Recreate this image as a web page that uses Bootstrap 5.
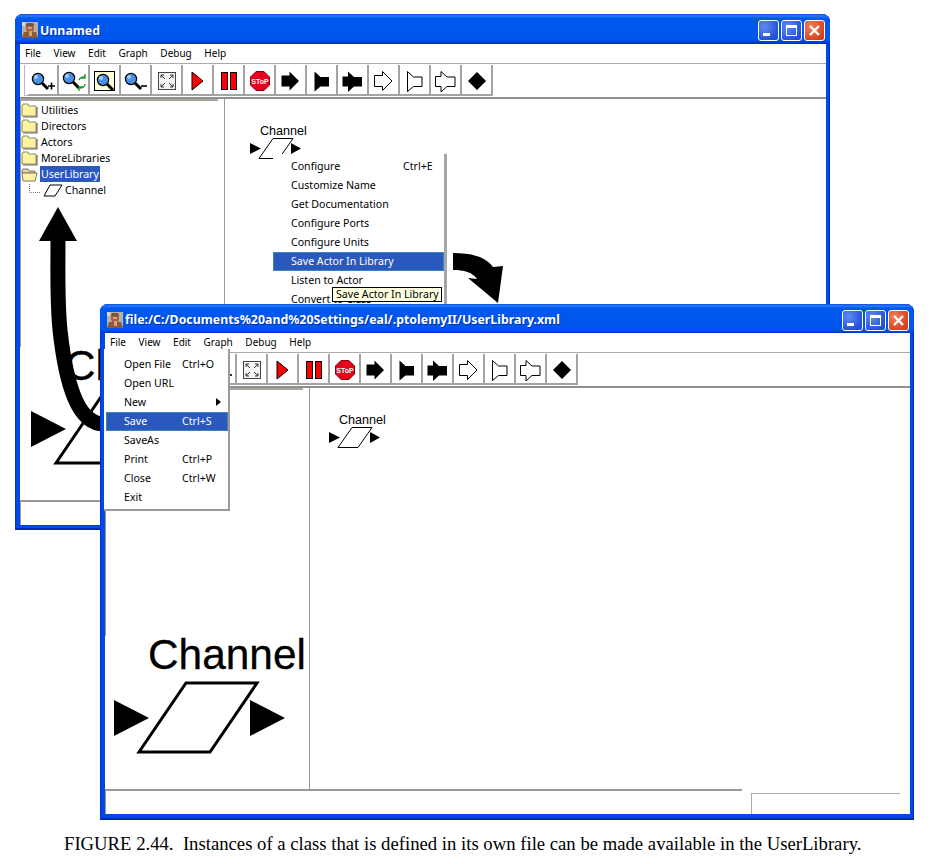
<!DOCTYPE html>
<html lang="en">
<head>
<meta charset="UTF-8">
<title>FIGURE 2.44</title>
<meta name="viewport" content="width=device-width, initial-scale=1">
<link href="https://cdn.jsdelivr.net/npm/bootstrap@5.3.0/dist/css/bootstrap.min.css" rel="stylesheet">
<style>
body { background: #fff; width: 938px; height: 864px; overflow: hidden; position: relative; font-family: "Noto Sans", "DejaVu Sans", sans-serif; font-size: 10.6px; color: #000; }

/* windows on the desktop */
.xp-window { position: absolute; width: 815px; height: 516px; background: #0048e8; border-radius: 8px 8px 0 0; padding: 0 4px 5px 5px; box-shadow: inset 1px 0 #0831d9, inset -1px 0 #0029b8, inset 0 -2px #0029b8; }
.win-one { left: 15px; top: 14px; z-index: 1; }
.win-two { left: 100px; top: 304px; width: 814px; z-index: 5; }
.xp-title { height: 30px; margin: 0 -4px 0 -5px; padding: 0 5px 0 7px; background: linear-gradient(#0a4fe0 0, #2b7bf6 2px, #0058ee 4px, #0056ec 26px, #0029c8 30px); border-radius: 8px 8px 0 0; color: #fff; font-family: "Noto Sans", "DejaVu Sans", sans-serif; font-weight: 700; font-size: 12.35px; flex: none; }
.win-two .xp-title { height: 29px; }
.title-ico { margin: 2px 2px 0 0; }
.title-text { margin-top: 4px; text-shadow: 1px 1px #0030a8; }
.cap-btn { width: 21px; height: 21px; margin: 3px 0 0 2px; border: 1px solid #fff; border-radius: 3px; background: radial-gradient(circle at 30% 30%, #5f8cf5, #2350d8 75%); }
.cap-close { background: radial-gradient(circle at 30% 30%, #f0805c, #d8401c 75%); }
.xp-inner { background: #fff; height: calc(100% - 30px); }
.menu-line { height: 19px; padding-left: 5px; gap: 12.6px; line-height: 19px; font-size: 10px; flex: none; }
.tool-line { height: 36px; border-top: 1px solid #aaa; border-bottom: 2px solid #8f8f8f; padding: 1px 0 0 4px; flex: none; }
.grip { width: 4px; height: 31px; border-left: 1px solid #bbb; border-bottom: 1px solid #bbb; }
.tool-btn { width: 31px; height: 31px; padding: 0; border: 0; border-right: 2px solid #a3a3a3; border-bottom: 2px solid #a3a3a3; border-radius: 0; background: #fff; }

/* panes */
.main-area { min-height: 0; }
.side-pane { width: 205px; border-right: 1px solid #999; }
.tree-area { height: 248px; border-top: 2px solid #aaa79a; border-left: 1px solid #999; margin-right: 6px; }
.tree-list { padding: 1px 0 0 0; }
.tree-row { height: 16px; padding: 0; border: 0; background: transparent; color: #000; line-height: 16px; gap: 3px; }
.tree-row.sel-row span { background: #2a58bd; color: #fff; padding: 0 1px; margin-left: -1px; }
.tree-child { padding-left: 8px; gap: 2px; }
.big-label { height: 38px; padding-left: 43px; font: 42.4px/38px "Liberation Sans", Arial, sans-serif; white-space: nowrap; -webkit-text-stroke: .3px #000; }
.win-one .big-label { padding-left: 45px; }
.win-one .big-shape { margin-left: 2px; }
.big-shape { display: block; }
.canvas-pane { position: relative; }
.graph-node { position: absolute; width: 56px; }
.win-one .graph-node { left: 25px; top: 25px; }
.win-two .graph-node { left: 19px; top: 25px; }
.node-label { padding-left: 10px; font: 12.6px/14px "Liberation Sans", Arial, sans-serif; }
.status-line { height: 25px; flex: none; }
.status-main { flex: 1; border-top: 2px solid #999; border-left: 1px solid #999; }
.status-side { width: 149px; height: 21px; margin: 4px 10px 0 9px; border-top: 1px solid #aaa; border-left: 1px solid #aaa; }

/* menus */
.ui-menu { display: block; min-width: 0; padding: 0; margin: 0; border: 0; border-radius: 0; font-size: 10.6px; color: #000; background: #fff; }
.ui-menu .dropdown-item { position: relative; display: flex; height: 19px; padding: 0 0 0 18px; line-height: 19px; color: #000; font-size: 10.6px; }
.ui-menu .dropdown-item.active { background: #2a58bd; color: #fff; box-shadow: inset 0 0 0 1px #3c86b4; }
.item-name { flex: none; width: 58px; }
.menu-context .item-name { width: 112px; }
.menu-context { position: absolute; left: 273px; top: 154px; width: 174px; padding-top: 3px; z-index: 2; border-right: 3px solid #a6a6a6; }
.menu-file { position: absolute; left: 104px; top: 349px; width: 126px; padding-top: 6px; padding-bottom: 2px; padding-left: 2px; z-index: 6; border-right: 2px solid #9a9a9a; border-bottom: 2px solid #9a9a9a; }
.sub-arrow { position: absolute; right: 7px; top: 5px; width: 0; height: 0; border-left: 5px solid #000; border-top: 4px solid transparent; border-bottom: 4px solid transparent; }
.hint-tip { position: absolute; left: 332px; top: 287px; width: 110px; height: 15px; background: #ffffe1; border: 1px solid #000; line-height: 13px; padding-left: 3px; z-index: 3; white-space: nowrap; }

/* hand drawn arrows */
.big-arrow { position: absolute; left: 30px; top: 200px; z-index: 2; }
.turn-arrow { position: absolute; left: 450px; top: 250px; z-index: 2; }
.fig-caption { position: absolute; left: 64px; top: 833px; font: 18.7px/22px "Liberation Serif", "Times New Roman", serif; white-space: pre; }
</style>
</head>
<body>

<!-- shared icons -->
<svg width="0" height="0" class="position-absolute">
  <defs>
    <g id="lens"><line x1="11" y1="11" x2="17" y2="17" stroke="#000" stroke-width="3"/><circle cx="7" cy="7" r="5.6" fill="#4b8fe6" stroke="#000" stroke-width="1.2"/><circle cx="5" cy="5" r="2" fill="#a8cdf5"/></g>
    <symbol id="ic-zoom-in" viewBox="0 0 24 20"><use href="#lens" x="0" y="1"/><path d="M17 15h7M20.500 11.500v7" stroke="#000" stroke-width="1.6"/></symbol>
    <symbol id="ic-zoom-reset" viewBox="0 0 24 20"><use href="#lens" x="0" y="0"/><path d="M17 9a5 4 0 0 1 6-3M23 3v4h-4M23 13a5 4 0 0 1-6 4M17 20v-4h4" fill="none" stroke="#1d9a2c" stroke-width="1.400"/></symbol>
    <symbol id="ic-zoom-fit" viewBox="0 0 21 20"><rect x=".5" y=".5" width="20" height="19" fill="#ffffd8" stroke="#000"/><use href="#lens" x="2" y="2"/></symbol>
    <symbol id="ic-zoom-out" viewBox="0 0 24 20"><use href="#lens" x="0" y="1"/><path d="M17 15h6" stroke="#000" stroke-width="1.6"/></symbol>
    <symbol id="ic-fit" viewBox="0 0 18 18"><rect x=".5" y=".5" width="17" height="17" fill="#f4f4f4" stroke="#444"/><path d="M3 3l4 4M3 3h3M3 3v3M15 3l-4 4M15 3h-3M15 3v3M3 15l4-4M3 15h3M3 15v-3M15 15l-4-4M15 15h-3M15 15v-3" fill="none" stroke="#333"/></symbol>
    <symbol id="ic-play" viewBox="0 0 13 20"><path d="M1 1l11 9-11 9z" fill="#f00" stroke="#000"/></symbol>
    <symbol id="ic-pause" viewBox="0 0 16 18"><rect x=".5" y=".5" width="6" height="17" fill="#f00" stroke="#000"/><rect x="9.500" y=".5" width="6" height="17" fill="#f00" stroke="#000"/></symbol>
    <symbol id="ic-stop" viewBox="0 0 20 20"><path d="M6 .5h8l5.500 5.500v8L14 19.500H6L.5 14V6z" fill="#e8001c" stroke="#8a0010"/><text x="10" y="13" text-anchor="middle" font-family="Liberation Sans, sans-serif" font-size="7" font-weight="700" fill="#fff">SToP</text></symbol>
    <path id="sh-arrow" d="M.5 4.500h8V.5l9.500 9.500-9.500 9.500v-4h-8z"/>
    <path id="sh-flag" d="M.5.5l6 5.500h8.500v9.500H6.500l-6 5z"/>
    <path id="sh-both" d="M.5 5.500h5.500V.5l6 5.500h8v9.500h-8l-6 5.500v-5.500H.5z"/>
    <symbol id="ic-arrow" viewBox="0 0 19 20"><use href="#sh-arrow"/></symbol>
    <symbol id="ic-flag" viewBox="0 0 16 21"><use href="#sh-flag"/></symbol>
    <symbol id="ic-both" viewBox="0 0 21 21"><use href="#sh-both"/></symbol>
    <symbol id="ic-arrow-o" viewBox="0 0 19 20"><use href="#sh-arrow" fill="#fff" stroke="#000"/></symbol>
    <symbol id="ic-flag-o" viewBox="0 0 16 21"><use href="#sh-flag" fill="#fff" stroke="#000"/></symbol>
    <symbol id="ic-both-o" viewBox="0 0 21 21"><use href="#sh-both" fill="#fff" stroke="#000"/></symbol>
    <symbol id="ic-diamond" viewBox="0 0 18 18"><path d="M9 0l9 9-9 9-9-9z"/></symbol>
    <symbol id="ic-folder" viewBox="0 0 17 15"><path d="M1 3l1-2h5l1 2h7v10H1z" fill="#fff2a0" stroke="#8a8a70"/><path d="M16 4v10H2" fill="none" stroke="#666" stroke-width="1.2"/></symbol>
    <symbol id="ic-folder-open" viewBox="0 0 17 15"><path d="M1 4l1-2h5l1 2h6v2H1z" fill="#e8d888" stroke="#777"/><path d="M1 6h15l-2 8H2z" fill="#fff2a0" stroke="#777"/></symbol>
    <symbol id="ic-ptolemy" viewBox="0 0 16 16"><rect width="16" height="16" fill="#b8b0a0"/><path d="M4 2h8v5l-1 3H5L4 7z" fill="#a86040"/><path d="M5 1h6l1 3H4z" fill="#6a5a48"/><path d="M0 16l2-6h12l2 6z" fill="#8a5a3a"/><path d="M6 5h4v2H6zM7 9h3v5H7z" fill="#d8a080"/><path d="M0 0h3v4H0z" fill="#dcd8c8"/></symbol>
    <symbol id="ic-channel-tree" viewBox="0 0 20 13"><path d="M1 12L7 1h12l-7 11z" fill="#fff" stroke="#000"/></symbol>
    <symbol id="ic-min" viewBox="0 0 19 19"><rect x="4" y="12" width="7" height="3" fill="#fff"/></symbol>
    <symbol id="ic-max" viewBox="0 0 19 19"><rect x="4.500" y="4.500" width="10" height="10" fill="none" stroke="#fff"/><rect x="4" y="4" width="11" height="3" fill="#fff"/></symbol>
    <symbol id="ic-close" viewBox="0 0 19 19"><path d="M5 5l9 9M14 5l-9 9" stroke="#fff" stroke-width="2.400"/></symbol>
    <symbol id="ic-node" viewBox="0 0 54 21"><path d="M0 5l11 5.500L0 16zM41 5l10 5.500L41 16z"/><path d="M9 20.500L23 .5h20L29 20.500z" fill="#fff" stroke="#000"/></symbol>
    <g id="big-node"><path d="M9 26l35 18-35 18zM145 26l35 18-35 18z"/><path d="M34 78L81 9h71l-47 69z" fill="#fff" stroke="#000" stroke-width="3"/></g>
  </defs>
</svg>

<!-- first window: Unnamed -->
<div class="xp-window win-one d-flex flex-column">
  <div class="xp-title d-flex align-items-center">
    <svg class="title-ico" width="16" height="16"><use href="#ic-ptolemy"/></svg>
    <span class="title-text flex-grow-1">Unnamed</span>
    <span class="cap-btn"><svg width="19" height="19" class="d-block"><use href="#ic-min"/></svg></span>
    <span class="cap-btn"><svg width="19" height="19" class="d-block"><use href="#ic-max"/></svg></span>
    <span class="cap-btn cap-close"><svg width="19" height="19" class="d-block"><use href="#ic-close"/></svg></span>
  </div>
  <div class="xp-inner d-flex flex-column">
    <div class="menu-line d-flex"><span>File</span><span>View</span><span>Edit</span><span>Graph</span><span>Debug</span><span>Help</span></div>
    <div class="tool-line d-flex">
      <span class="grip"></span>
      <button class="btn tool-btn"><svg width="24" height="20"><use href="#ic-zoom-in"/></svg></button>
      <button class="btn tool-btn"><svg width="24" height="20"><use href="#ic-zoom-reset"/></svg></button>
      <button class="btn tool-btn"><svg width="21" height="20"><use href="#ic-zoom-fit"/></svg></button>
      <button class="btn tool-btn"><svg width="24" height="20"><use href="#ic-zoom-out"/></svg></button>
      <button class="btn tool-btn"><svg width="18" height="18"><use href="#ic-fit"/></svg></button>
      <button class="btn tool-btn"><svg width="13" height="20"><use href="#ic-play"/></svg></button>
      <button class="btn tool-btn"><svg width="16" height="18"><use href="#ic-pause"/></svg></button>
      <button class="btn tool-btn"><svg width="20" height="20"><use href="#ic-stop"/></svg></button>
      <button class="btn tool-btn"><svg width="19" height="20"><use href="#ic-arrow"/></svg></button>
      <button class="btn tool-btn"><svg width="16" height="21"><use href="#ic-flag"/></svg></button>
      <button class="btn tool-btn"><svg width="21" height="21"><use href="#ic-both"/></svg></button>
      <button class="btn tool-btn"><svg width="19" height="20"><use href="#ic-arrow-o"/></svg></button>
      <button class="btn tool-btn"><svg width="16" height="21"><use href="#ic-flag-o"/></svg></button>
      <button class="btn tool-btn"><svg width="21" height="21"><use href="#ic-both-o"/></svg></button>
      <button class="btn tool-btn"><svg width="18" height="18"><use href="#ic-diamond"/></svg></button>
    </div>
    <div class="main-area d-flex flex-grow-1">
      <div class="side-pane">
        <div class="tree-area">
          <div class="list-group list-group-flush tree-list">
            <div class="list-group-item tree-row d-flex align-items-center"><svg width="17" height="15"><use href="#ic-folder"/></svg>Utilities</div>
            <div class="list-group-item tree-row d-flex align-items-center"><svg width="17" height="15"><use href="#ic-folder"/></svg>Directors</div>
            <div class="list-group-item tree-row d-flex align-items-center"><svg width="17" height="15"><use href="#ic-folder"/></svg>Actors</div>
            <div class="list-group-item tree-row d-flex align-items-center"><svg width="17" height="15"><use href="#ic-folder"/></svg>MoreLibraries</div>
            <div class="list-group-item tree-row sel-row d-flex align-items-center"><svg width="17" height="15"><use href="#ic-folder-open"/></svg><span>UserLibrary</span></div>
            <div class="list-group-item tree-row tree-child d-flex align-items-center">
              <svg width="12" height="12"><path d="M.5 0v8.500H12" fill="none" stroke="#777" stroke-dasharray="1 1"/></svg>
              <svg width="20" height="13"><use href="#ic-channel-tree"/></svg><span>Channel</span>
            </div>
          </div>
        </div>
        <div class="big-label">Channel</div>
        <svg class="big-shape" width="180" height="90"><use href="#big-node"/></svg>
      </div>
      <div class="canvas-pane flex-grow-1">
        <div class="graph-node"><div class="node-label">Channel</div><svg width="54" height="21" class="d-block"><use href="#ic-node"/></svg></div>
      </div>
    </div>
    <div class="status-line d-flex"><div class="status-main"></div><div class="status-side"></div></div>
  </div>
</div>

<!-- context menu over the first window -->
<div class="dropdown-menu ui-menu menu-context">
  <a class="dropdown-item"><span class="item-name">Configure</span><span>Ctrl+E</span></a>
  <a class="dropdown-item">Customize Name</a>
  <a class="dropdown-item">Get Documentation</a>
  <a class="dropdown-item">Configure Ports</a>
  <a class="dropdown-item">Configure Units</a>
  <a class="dropdown-item active">Save Actor In Library</a>
  <a class="dropdown-item">Listen to Actor</a>
  <a class="dropdown-item">Convert to Class</a>
</div>
<div class="hint-tip">Save Actor In Library</div>

<!-- arrows drawn over the figure -->
<svg class="big-arrow" width="80" height="240">
  <path d="M74 224C48 224 36 185 30 130 27 100 28 70 28 38" fill="none" stroke="#000" stroke-width="15"/>
  <path d="M28 7L47 41H9z"/>
</svg>
<svg class="turn-arrow" width="60" height="60">
  <path d="M3 3C20 3 35 6 43 17L53 16 48 53 18 28 27 29C22 22 14 20 3 20z"/>
</svg>

<!-- second window: the library file -->
<div class="xp-window win-two d-flex flex-column">
  <div class="xp-title d-flex align-items-center">
    <svg class="title-ico" width="16" height="16"><use href="#ic-ptolemy"/></svg>
    <span class="title-text flex-grow-1">file:/C:/Documents%20and%20Settings/eal/.ptolemyII/UserLibrary.xml</span>
    <span class="cap-btn"><svg width="19" height="19" class="d-block"><use href="#ic-min"/></svg></span>
    <span class="cap-btn"><svg width="19" height="19" class="d-block"><use href="#ic-max"/></svg></span>
    <span class="cap-btn cap-close"><svg width="19" height="19" class="d-block"><use href="#ic-close"/></svg></span>
  </div>
  <div class="xp-inner d-flex flex-column">
    <div class="menu-line d-flex"><span>File</span><span>View</span><span>Edit</span><span>Graph</span><span>Debug</span><span>Help</span></div>
    <div class="tool-line d-flex">
      <span class="grip"></span>
      <button class="btn tool-btn"><svg width="24" height="20"><use href="#ic-zoom-in"/></svg></button>
      <button class="btn tool-btn"><svg width="24" height="20"><use href="#ic-zoom-reset"/></svg></button>
      <button class="btn tool-btn"><svg width="21" height="20"><use href="#ic-zoom-fit"/></svg></button>
      <button class="btn tool-btn"><svg width="24" height="20"><use href="#ic-zoom-out"/></svg></button>
      <button class="btn tool-btn"><svg width="18" height="18"><use href="#ic-fit"/></svg></button>
      <button class="btn tool-btn"><svg width="13" height="20"><use href="#ic-play"/></svg></button>
      <button class="btn tool-btn"><svg width="16" height="18"><use href="#ic-pause"/></svg></button>
      <button class="btn tool-btn"><svg width="20" height="20"><use href="#ic-stop"/></svg></button>
      <button class="btn tool-btn"><svg width="19" height="20"><use href="#ic-arrow"/></svg></button>
      <button class="btn tool-btn"><svg width="16" height="21"><use href="#ic-flag"/></svg></button>
      <button class="btn tool-btn"><svg width="21" height="21"><use href="#ic-both"/></svg></button>
      <button class="btn tool-btn"><svg width="19" height="20"><use href="#ic-arrow-o"/></svg></button>
      <button class="btn tool-btn"><svg width="16" height="21"><use href="#ic-flag-o"/></svg></button>
      <button class="btn tool-btn"><svg width="21" height="21"><use href="#ic-both-o"/></svg></button>
      <button class="btn tool-btn"><svg width="18" height="18"><use href="#ic-diamond"/></svg></button>
    </div>
    <div class="main-area d-flex flex-grow-1">
      <div class="side-pane">
        <div class="tree-area"></div>
        <div class="big-label">Channel</div>
        <svg class="big-shape" width="180" height="90"><use href="#big-node"/></svg>
      </div>
      <div class="canvas-pane flex-grow-1">
        <div class="graph-node"><div class="node-label">Channel</div><svg width="54" height="21" class="d-block"><use href="#ic-node"/></svg></div>
      </div>
    </div>
    <div class="status-line d-flex"><div class="status-main"></div><div class="status-side"></div></div>
  </div>
</div>

<!-- File menu of the second window -->
<div class="dropdown-menu ui-menu menu-file">
  <a class="dropdown-item"><span class="item-name">Open File</span><span>Ctrl+O</span></a>
  <a class="dropdown-item">Open URL</a>
  <a class="dropdown-item">New<span class="sub-arrow"></span></a>
  <a class="dropdown-item active"><span class="item-name">Save</span><span>Ctrl+S</span></a>
  <a class="dropdown-item">SaveAs</a>
  <a class="dropdown-item"><span class="item-name">Print</span><span>Ctrl+P</span></a>
  <a class="dropdown-item"><span class="item-name">Close</span><span>Ctrl+W</span></a>
  <a class="dropdown-item">Exit</a>
</div>

<div class="fig-caption">FIGURE 2.44.  Instances of a class that is defined in its own file can be made available in the UserLibrary.</div>

<script src="https://cdn.jsdelivr.net/npm/bootstrap@5.3.0/dist/js/bootstrap.bundle.min.js"></script>
</body>
</html>
